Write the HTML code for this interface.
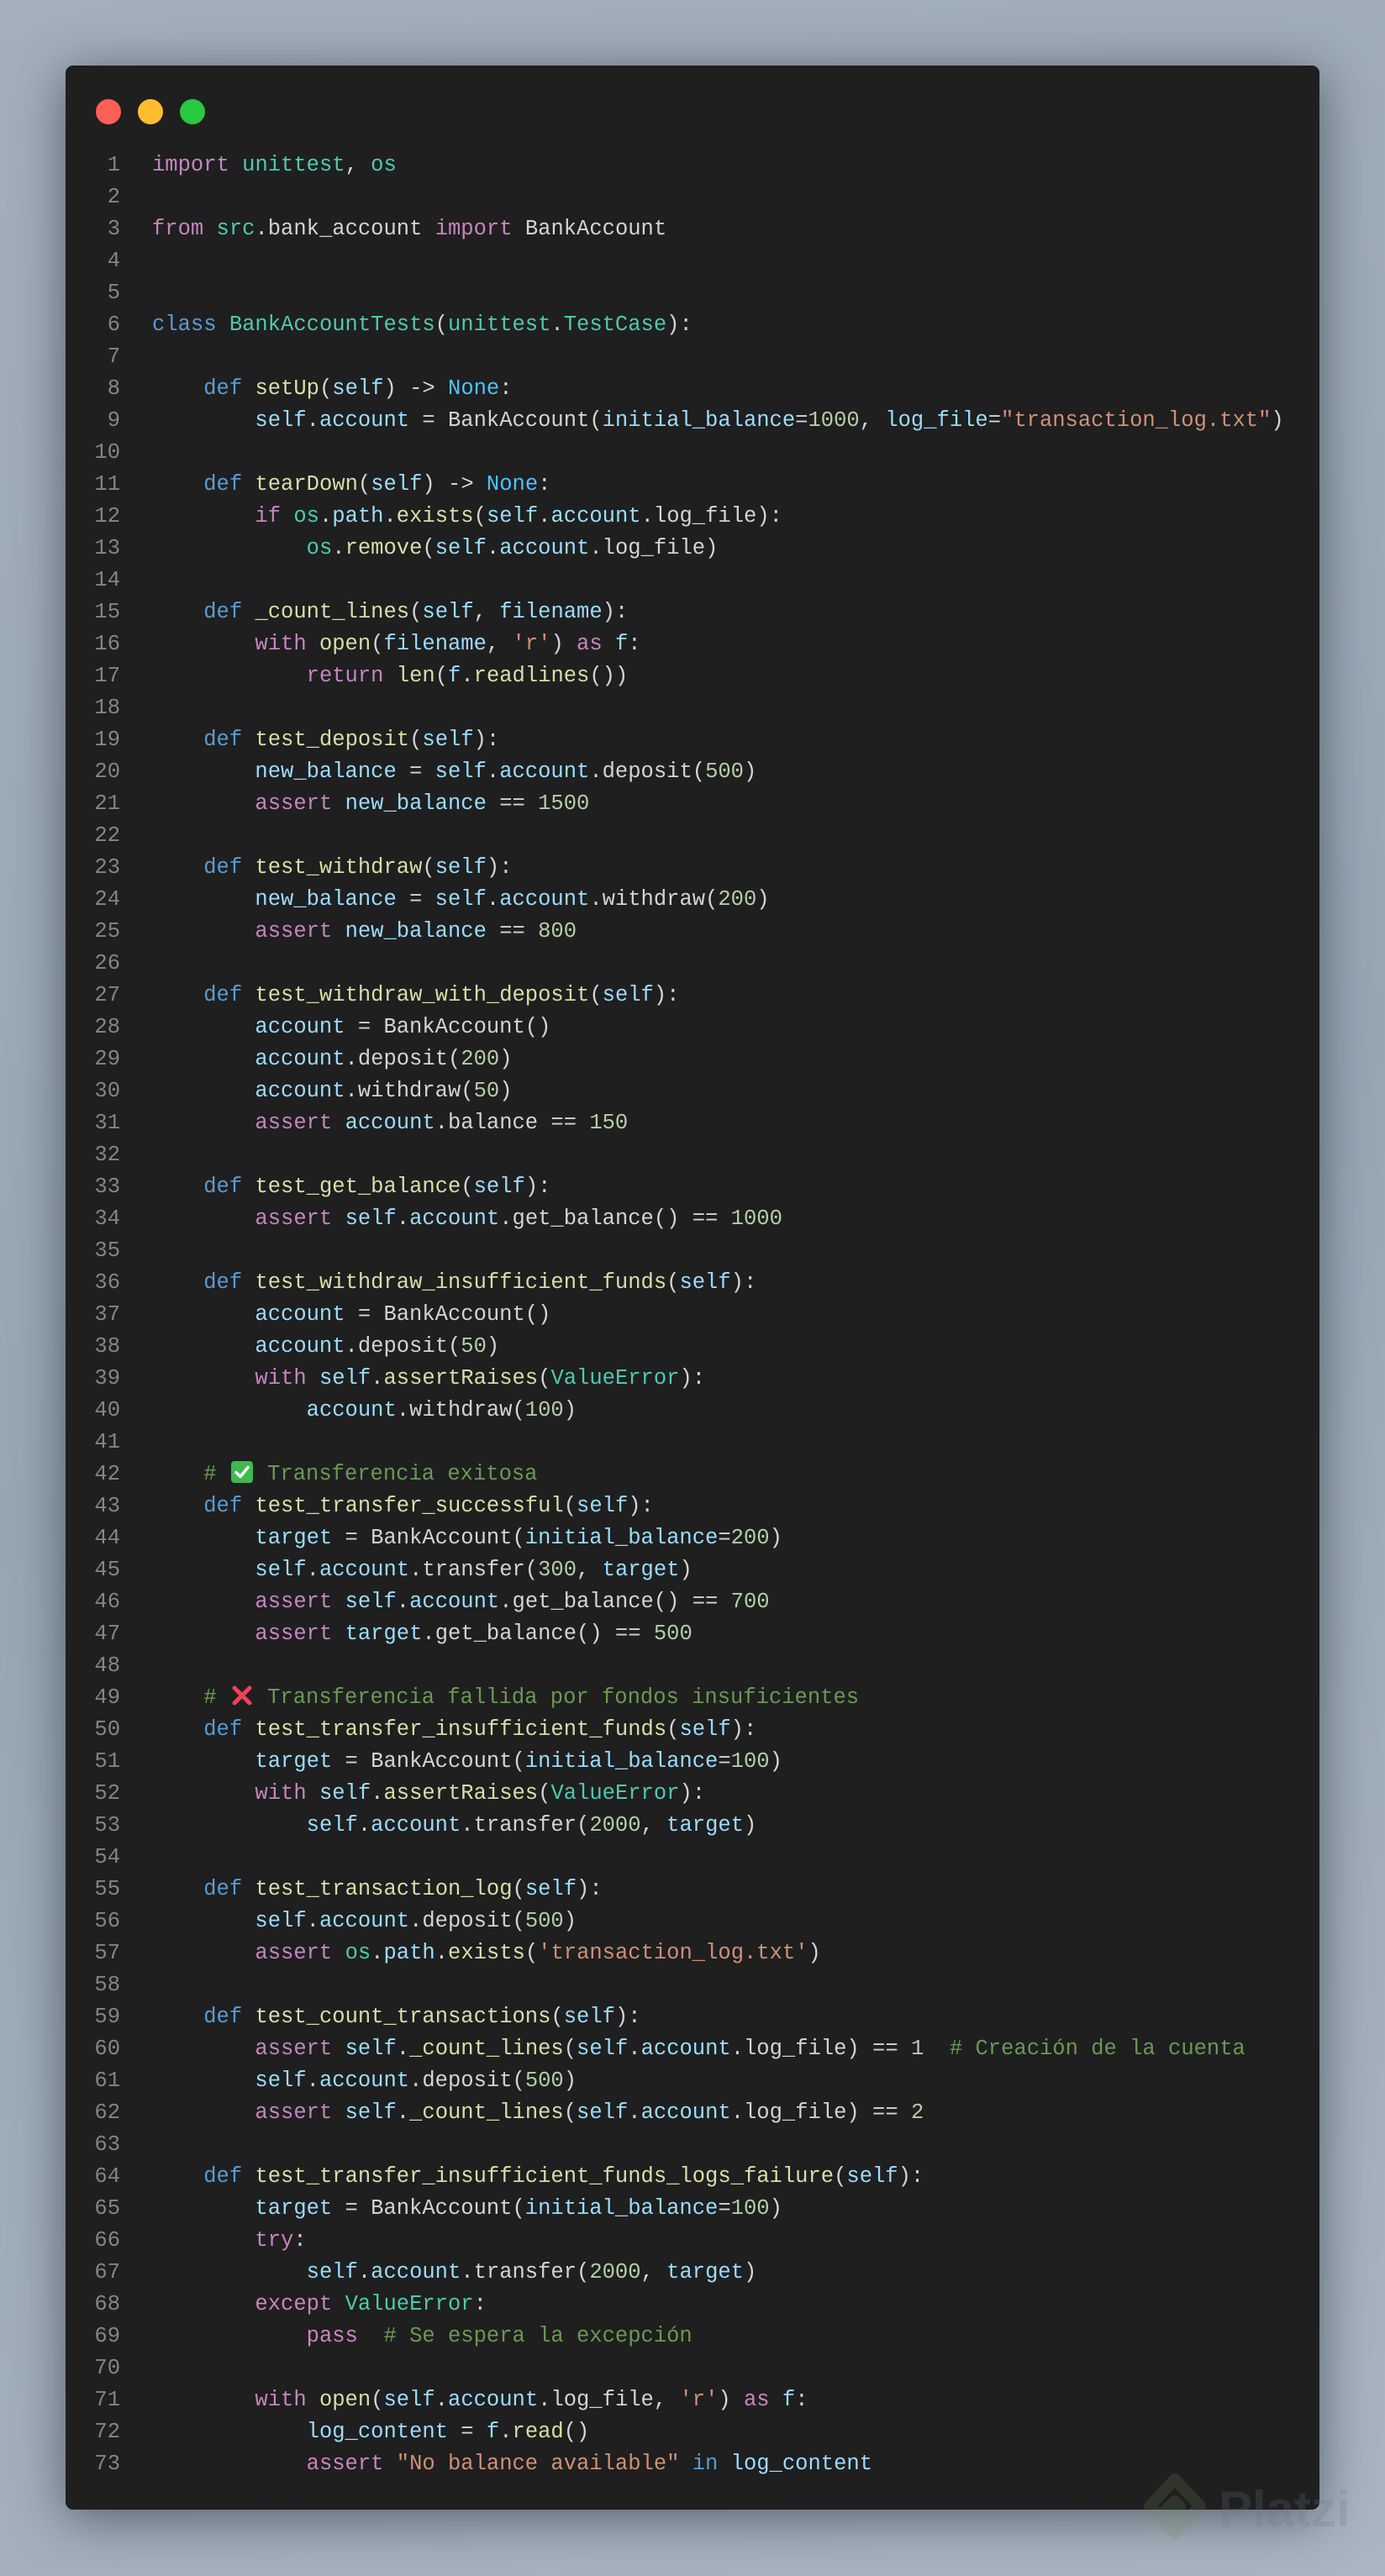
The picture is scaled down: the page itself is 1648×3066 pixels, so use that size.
<!DOCTYPE html>
<html><head><meta charset="utf-8"><style>
html,body{margin:0;padding:0}
body{width:1648px;height:3066px;overflow:hidden;background:linear-gradient(160deg,#a3afbb 0%,#98a6b4 50%,#a9b5c0 100%);position:relative;font-family:"Liberation Mono",monospace}
.win{position:absolute;left:78px;top:78px;width:1492px;height:2909px;background:#1f1f1f;border-radius:9px;box-shadow:0 10px 60px rgba(20,30,40,.55)}
.dot{position:absolute;top:40px;width:30px;height:30px;border-radius:50%}
.code{position:absolute;left:0;top:178px;font-size:25.5px;line-height:38px;white-space:pre;color:#d4d4d4}
.ln{display:inline-block;width:143px;text-align:right;color:#858585;margin-right:38px}
.k{color:#c586c0}.b{color:#569cd6}.f{color:#dcdcaa}.v{color:#9cdcfe}.t{color:#4ec9b0}.s{color:#ce9178}.n{color:#b5cea8}.c{color:#6a9955}.no{color:#4fc1ff}
.em{display:inline-block;width:28px;height:28px;vertical-align:-5px;margin:0 1px}
.wm{position:absolute;left:1450px;top:2952px;font-family:"Liberation Sans",sans-serif;font-size:60px;font-weight:bold;color:rgba(110,120,132,.22)}
</style></head><body>
<div class="win">
<div class="dot" style="left:36px;background:#fe5f57"></div>
<div class="dot" style="left:86px;background:#febc2e"></div>
<div class="dot" style="left:136px;background:#28c840"></div>
</div>
<div class="code"><div><span class="ln">1</span><span class="k">import</span> <span class="t">unittest</span>, <span class="t">os</span></div><div><span class="ln">2</span></div><div><span class="ln">3</span><span class="k">from</span> <span class="t">src</span>.bank_account <span class="k">import</span> BankAccount</div><div><span class="ln">4</span></div><div><span class="ln">5</span></div><div><span class="ln">6</span><span class="b">class</span> <span class="t">BankAccountTests</span>(<span class="t">unittest</span>.<span class="t">TestCase</span>):</div><div><span class="ln">7</span></div><div><span class="ln">8</span>    <span class="b">def</span> <span class="f">setUp</span>(<span class="v">self</span>) -&gt; <span class="no">None</span>:</div><div><span class="ln">9</span>        <span class="v">self</span>.<span class="v">account</span> = BankAccount(<span class="v">initial_balance</span>=<span class="n">1000</span>, <span class="v">log_file</span>=<span class="s">"transaction_log.txt"</span>)</div><div><span class="ln">10</span></div><div><span class="ln">11</span>    <span class="b">def</span> <span class="f">tearDown</span>(<span class="v">self</span>) -&gt; <span class="no">None</span>:</div><div><span class="ln">12</span>        <span class="k">if</span> <span class="t">os</span>.<span class="v">path</span>.<span class="f">exists</span>(<span class="v">self</span>.<span class="v">account</span>.log_file):</div><div><span class="ln">13</span>            <span class="t">os</span>.<span class="f">remove</span>(<span class="v">self</span>.<span class="v">account</span>.log_file)</div><div><span class="ln">14</span></div><div><span class="ln">15</span>    <span class="b">def</span> <span class="f">_count_lines</span>(<span class="v">self</span>, <span class="v">filename</span>):</div><div><span class="ln">16</span>        <span class="k">with</span> <span class="f">open</span>(<span class="v">filename</span>, <span class="s">'r'</span>) <span class="k">as</span> <span class="v">f</span>:</div><div><span class="ln">17</span>            <span class="k">return</span> <span class="f">len</span>(<span class="v">f</span>.<span class="f">readlines</span>())</div><div><span class="ln">18</span></div><div><span class="ln">19</span>    <span class="b">def</span> <span class="f">test_deposit</span>(<span class="v">self</span>):</div><div><span class="ln">20</span>        <span class="v">new_balance</span> = <span class="v">self</span>.<span class="v">account</span>.deposit(<span class="n">500</span>)</div><div><span class="ln">21</span>        <span class="k">assert</span> <span class="v">new_balance</span> == <span class="n">1500</span></div><div><span class="ln">22</span></div><div><span class="ln">23</span>    <span class="b">def</span> <span class="f">test_withdraw</span>(<span class="v">self</span>):</div><div><span class="ln">24</span>        <span class="v">new_balance</span> = <span class="v">self</span>.<span class="v">account</span>.withdraw(<span class="n">200</span>)</div><div><span class="ln">25</span>        <span class="k">assert</span> <span class="v">new_balance</span> == <span class="n">800</span></div><div><span class="ln">26</span></div><div><span class="ln">27</span>    <span class="b">def</span> <span class="f">test_withdraw_with_deposit</span>(<span class="v">self</span>):</div><div><span class="ln">28</span>        <span class="v">account</span> = BankAccount()</div><div><span class="ln">29</span>        <span class="v">account</span>.deposit(<span class="n">200</span>)</div><div><span class="ln">30</span>        <span class="v">account</span>.withdraw(<span class="n">50</span>)</div><div><span class="ln">31</span>        <span class="k">assert</span> <span class="v">account</span>.balance == <span class="n">150</span></div><div><span class="ln">32</span></div><div><span class="ln">33</span>    <span class="b">def</span> <span class="f">test_get_balance</span>(<span class="v">self</span>):</div><div><span class="ln">34</span>        <span class="k">assert</span> <span class="v">self</span>.<span class="v">account</span>.get_balance() == <span class="n">1000</span></div><div><span class="ln">35</span></div><div><span class="ln">36</span>    <span class="b">def</span> <span class="f">test_withdraw_insufficient_funds</span>(<span class="v">self</span>):</div><div><span class="ln">37</span>        <span class="v">account</span> = BankAccount()</div><div><span class="ln">38</span>        <span class="v">account</span>.deposit(<span class="n">50</span>)</div><div><span class="ln">39</span>        <span class="k">with</span> <span class="v">self</span>.<span class="f">assertRaises</span>(<span class="t">ValueError</span>):</div><div><span class="ln">40</span>            <span class="v">account</span>.withdraw(<span class="n">100</span>)</div><div><span class="ln">41</span></div><div><span class="ln">42</span>    <span class="c"># <svg class="em" viewBox="0 0 28 28"><rect x="1" y="1" width="26" height="26" rx="4" fill="#3fb950"/><path d="M7 14.5l5 5 9-11" stroke="#fff" stroke-width="3.5" fill="none" stroke-linecap="round" stroke-linejoin="round"/></svg> Transferencia exitosa</span></div><div><span class="ln">43</span>    <span class="b">def</span> <span class="f">test_transfer_successful</span>(<span class="v">self</span>):</div><div><span class="ln">44</span>        <span class="v">target</span> = BankAccount(<span class="v">initial_balance</span>=<span class="n">200</span>)</div><div><span class="ln">45</span>        <span class="v">self</span>.<span class="v">account</span>.transfer(<span class="n">300</span>, <span class="v">target</span>)</div><div><span class="ln">46</span>        <span class="k">assert</span> <span class="v">self</span>.<span class="v">account</span>.get_balance() == <span class="n">700</span></div><div><span class="ln">47</span>        <span class="k">assert</span> <span class="v">target</span>.get_balance() == <span class="n">500</span></div><div><span class="ln">48</span></div><div><span class="ln">49</span>    <span class="c"># <svg class="em" viewBox="0 0 28 28"><path d="M5 5L23 23M23 5L5 23" stroke="#f0405a" stroke-width="5" stroke-linecap="round"/></svg> Transferencia fallida por fondos insuficientes</span></div><div><span class="ln">50</span>    <span class="b">def</span> <span class="f">test_transfer_insufficient_funds</span>(<span class="v">self</span>):</div><div><span class="ln">51</span>        <span class="v">target</span> = BankAccount(<span class="v">initial_balance</span>=<span class="n">100</span>)</div><div><span class="ln">52</span>        <span class="k">with</span> <span class="v">self</span>.<span class="f">assertRaises</span>(<span class="t">ValueError</span>):</div><div><span class="ln">53</span>            <span class="v">self</span>.<span class="v">account</span>.transfer(<span class="n">2000</span>, <span class="v">target</span>)</div><div><span class="ln">54</span></div><div><span class="ln">55</span>    <span class="b">def</span> <span class="f">test_transaction_log</span>(<span class="v">self</span>):</div><div><span class="ln">56</span>        <span class="v">self</span>.<span class="v">account</span>.deposit(<span class="n">500</span>)</div><div><span class="ln">57</span>        <span class="k">assert</span> <span class="t">os</span>.<span class="v">path</span>.<span class="f">exists</span>(<span class="s">'transaction_log.txt'</span>)</div><div><span class="ln">58</span></div><div><span class="ln">59</span>    <span class="b">def</span> <span class="f">test_count_transactions</span>(<span class="v">self</span>):</div><div><span class="ln">60</span>        <span class="k">assert</span> <span class="v">self</span>.<span class="f">_count_lines</span>(<span class="v">self</span>.<span class="v">account</span>.log_file) == <span class="n">1</span>  <span class="c"># Creación de la cuenta</span></div><div><span class="ln">61</span>        <span class="v">self</span>.<span class="v">account</span>.deposit(<span class="n">500</span>)</div><div><span class="ln">62</span>        <span class="k">assert</span> <span class="v">self</span>.<span class="f">_count_lines</span>(<span class="v">self</span>.<span class="v">account</span>.log_file) == <span class="n">2</span></div><div><span class="ln">63</span></div><div><span class="ln">64</span>    <span class="b">def</span> <span class="f">test_transfer_insufficient_funds_logs_failure</span>(<span class="v">self</span>):</div><div><span class="ln">65</span>        <span class="v">target</span> = BankAccount(<span class="v">initial_balance</span>=<span class="n">100</span>)</div><div><span class="ln">66</span>        <span class="k">try</span>:</div><div><span class="ln">67</span>            <span class="v">self</span>.<span class="v">account</span>.transfer(<span class="n">2000</span>, <span class="v">target</span>)</div><div><span class="ln">68</span>        <span class="k">except</span> <span class="t">ValueError</span>:</div><div><span class="ln">69</span>            <span class="k">pass</span>  <span class="c"># Se espera la excepción</span></div><div><span class="ln">70</span></div><div><span class="ln">71</span>        <span class="k">with</span> <span class="f">open</span>(<span class="v">self</span>.<span class="v">account</span>.log_file, <span class="s">'r'</span>) <span class="k">as</span> <span class="v">f</span>:</div><div><span class="ln">72</span>            <span class="v">log_content</span> = <span class="v">f</span>.<span class="f">read</span>()</div><div><span class="ln">73</span>            <span class="k">assert</span> <span class="s">"No balance available"</span> <span class="b">in</span> <span class="v">log_content</span></div></div>
<svg style="position:absolute;left:1358px;top:2943px" width="80" height="90" viewBox="0 0 80 90"><path d="M40 8L70 40 40 72 28 60 46 40 40 34 22 52 10 40z" fill="none" stroke="rgba(120,140,90,.2)" stroke-width="14" stroke-linejoin="round"/></svg>
<div class="wm">Platzi</div>
</body></html>
